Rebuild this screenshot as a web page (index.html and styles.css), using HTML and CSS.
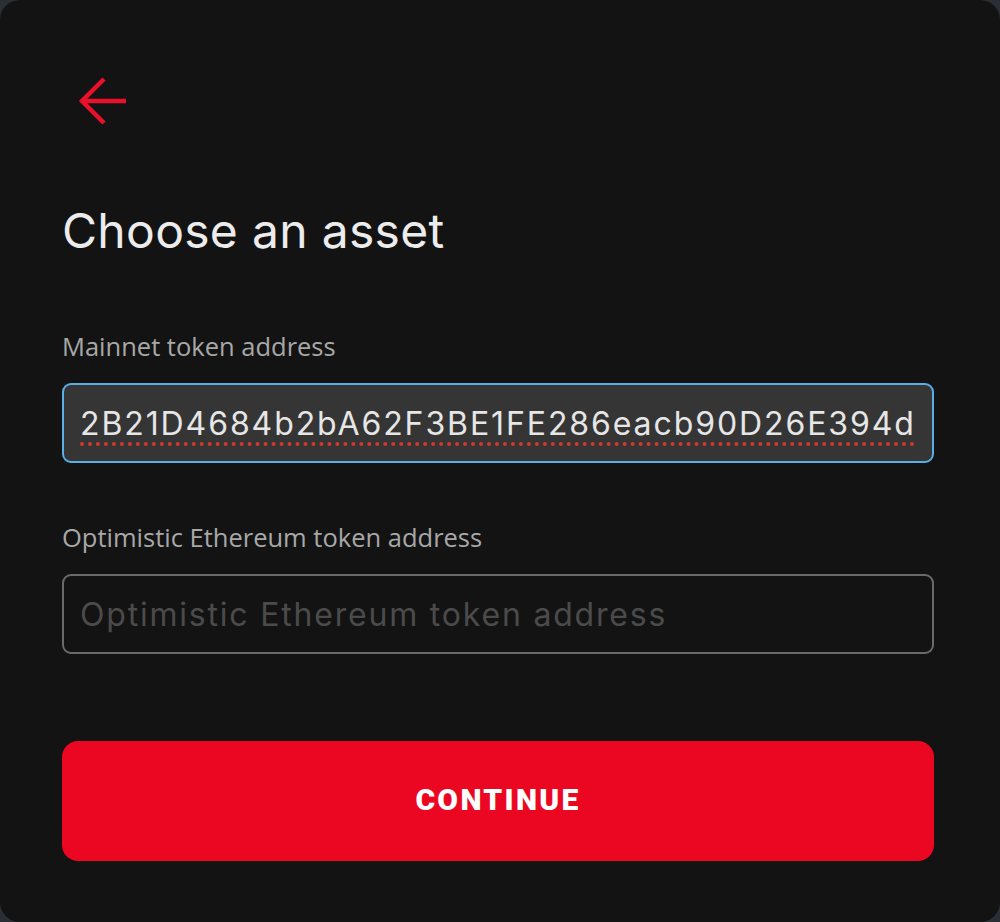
FILE: index.html
```html
<!DOCTYPE html>
<html lang="en">
<head>
<meta charset="utf-8">
<title>Choose an asset</title>
<link rel="stylesheet" href="styles.css">
</head>
<body>
<div class="card">
  <button class="back" aria-label="Back">
    <svg width="50" height="50" viewBox="0 0 50 50" fill="none" stroke="#e8102a" stroke-width="4.5">
      <path d="M48 24H4"/>
      <path d="M26 2L4 24l22 22"/>
    </svg>
  </button>
  <h1 class="title">Choose an asset</h1>
  <div class="field">
    <label class="label">Mainnet token address</label>
    <div class="input focused"><span class="value">2B21D4684b2bA62F3BE1FE286eacb90D26E394d</span></div>
  </div>
  <div class="field">
    <label class="label">Optimistic Ethereum token address</label>
    <div class="input"><span class="placeholder">Optimistic Ethereum token address</span></div>
  </div>
  <button class="continue">CONTINUE</button>
</div>
</body>
</html>
```
FILE: styles.css
```css
* { box-sizing: border-box; }
html, body { margin: 0; padding: 0; }
body {
  background: #2a2f36;
  width: 1000px;
  height: 922px;
  overflow: hidden;
}
.card {
  width: 1000px;
  height: 922px;
  background: #131313;
  border-radius: 20px;
  padding: 77px 66px 0 62px;
  display: flex;
  flex-direction: column;
}
.back {
  background: none;
  border: 0;
  padding: 0;
  margin: 0 0 0 16px;
  width: 50px;
  height: 50px;
  display: flex;
}
.back svg { display: block; }
.title {
  font-family: "Inter", "Rubik", sans-serif;
  font-weight: 400;
  font-size: 48px;
  color: #ececec;
  margin: 71px 0 0 0;
  line-height: 66px;
  letter-spacing: 0.3px;
}
.field {
  display: flex;
  flex-direction: column;
  margin-top: 64px;
}
.field + .field { margin-top: 56px; }
.label {
  font-family: "Open Sans", "Noto Sans", sans-serif;
  font-size: 25.5px;
  color: #a8a8a8;
  line-height: 36px;
  margin-bottom: 19px;
}
.input {
  height: 80px;
  border: 2px solid #6a6a6a;
  border-radius: 9px;
  display: flex;
  align-items: center;
  padding: 0 16px;
  overflow: hidden;
  white-space: nowrap;
}
.input.focused {
  border-color: #5aaee6;
  background: #353535;
}
.value {
  font-family: "Inter", sans-serif;
  font-size: 32px;
  color: #e6e6e6;
  letter-spacing: 1.9px;
  text-decoration: underline dotted #d0392e;
  text-decoration-thickness: 4px;
  text-underline-offset: 8px;
}
.placeholder {
  font-family: "Inter", sans-serif;
  font-size: 32px;
  color: #4b4b4b;
  letter-spacing: 1.8px;
}
.continue {
  margin-top: 87px;
  height: 120px;
  border: 0;
  border-radius: 16px;
  background: #eb0722;
  color: #ffffff;
  font-family: "Roboto", "Inter", sans-serif;
  font-weight: 900;
  font-size: 30px;
  letter-spacing: 2.3px;
  padding-bottom: 4px;
}
```
